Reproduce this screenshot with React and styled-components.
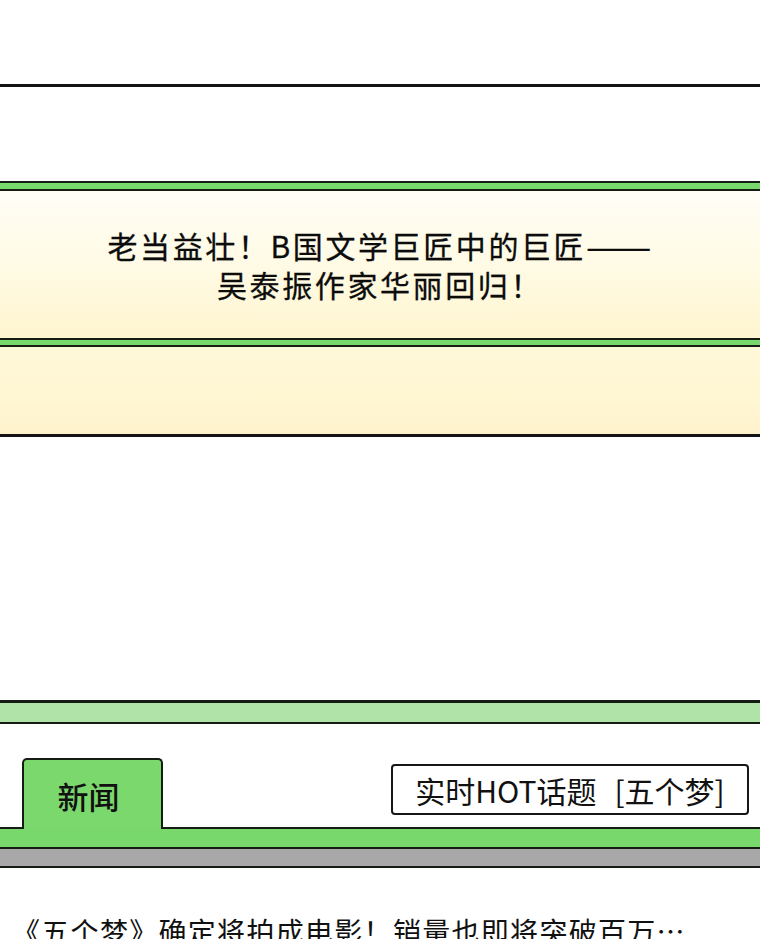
import styled, { createGlobalStyle } from "styled-components";

const GlobalStyle = createGlobalStyle`
  html, body {
    margin: 0;
    padding: 0;
    background: #ffffff;
  }
  body {
    font-family: "Noto Sans CJK SC", "Noto Sans", sans-serif;
    color: #111;
    overflow: hidden;
  }
`;

const Page = styled.div`
  width: 760px;
  height: 939px;
  display: flex;
  flex-direction: column;
  overflow: hidden;
  background: #fff;
`;

const Blank = styled.div`
  height: ${(p) => p.$h}px;
  flex-shrink: 0;
  background: #fff;
`;

const Rule = styled.div`
  height: ${(p) => p.$h || 3}px;
  flex-shrink: 0;
  background: #141414;
`;

// green strip framed by two dark lines
const Band = styled.div`
  flex-shrink: 0;
  height: ${(p) => p.$h}px;
  background: ${(p) => p.$color};
  border-top: ${(p) => p.$top ?? 2}px solid #151c14;
  border-bottom: 2px solid #151c14;
`;

const Panel = styled.div`
  flex-shrink: 0;
  height: ${(p) => p.$h}px;
  background: ${(p) =>
    p.$warm
      ? "linear-gradient(180deg, #fff8d8 0%, #fff6d2 60%, #fdf2cc 100%)"
      : "linear-gradient(180deg, #fffef7 0%, #fffae3 55%, #fff5cf 100%)"};
  display: flex;
  align-items: center;
  justify-content: center;
`;

const Headline = styled.h1`
  margin: 0;
  font-size: 30px;
  font-weight: 400;
  line-height: 39px;
  letter-spacing: 2.6px;
  text-align: center;
  color: #0c0c0c;
  -webkit-text-stroke: 0.3px #0c0c0c;
`;

const Dash = styled.span`
  display: inline-block;
  letter-spacing: 0;
  transform: scaleX(1.3);
  transform-origin: left center;
  margin-right: 16px;
`;

const TabRow = styled.div`
  flex-shrink: 0;
  height: 105px;
  box-sizing: border-box;
  display: flex;
  align-items: flex-end;
  padding: 0 11px 0 22px;
  border-bottom: 2px solid #151c14;
`;

const Tab = styled.div`
  width: 141px;
  height: 71px;
  box-sizing: border-box;
  margin-bottom: -2px;
  background: #7ad86d;
  border: 2px solid #151c14;
  border-bottom: none;
  border-radius: 5px 5px 0 0;
  display: flex;
  align-items: center;
  justify-content: center;
  padding: 2px 8px 0 0;
  font-size: 31px;
  font-weight: 500;
`;

const HotBox = styled.div`
  margin-left: auto;
  align-self: flex-start;
  margin-top: 40px;
  width: 358px;
  height: 51px;
  box-sizing: border-box;
  border: 2px solid #161616;
  border-radius: 4px;
  display: flex;
  align-items: center;
  justify-content: center;
  font-size: 30px;
  font-weight: 400;
  white-space: pre;
`;

const Topic = styled.span`
  margin-left: 18px;
`;

const NewsLine = styled.p`
  margin: 0;
  padding: 43px 0 0 12px;
  font-size: 28px;
  line-height: 40px;
  letter-spacing: 1.3px;
  white-space: nowrap;
  color: #111;
`;

export default function App() {
  return (
    <Page>
      <GlobalStyle />
      <Blank $h={84} />
      <Rule $h={3} />
      <Blank $h={94} />
      <Band $h={6} $color="#78d86c" />
      <Panel $h={147}>
        <Headline>
          老当益壮！B国文学巨匠中的巨匠<Dash>——</Dash>
          <br />
          吴泰振作家华丽回归！
        </Headline>
      </Panel>
      <Band $h={5} $color="#78d86c" />
      <Panel $h={87} $warm />
      <Rule $h={3} />
      <Blank $h={263} />
      <Band $h={19} $top={3} $color="#b0e3a8" />
      <TabRow>
        <Tab>新闻</Tab>
        <HotBox>
          实时HOT话题<Topic>[五个梦]</Topic>
        </HotBox>
      </TabRow>
      <Band $h={18} $top={0} $color="#78d86c" />
      <Band $h={17} $top={0} $color="#a8a8a8" />
      <NewsLine>《五个梦》确定将拍成电影！销量也即将突破百万…</NewsLine>
    </Page>
  );
}
